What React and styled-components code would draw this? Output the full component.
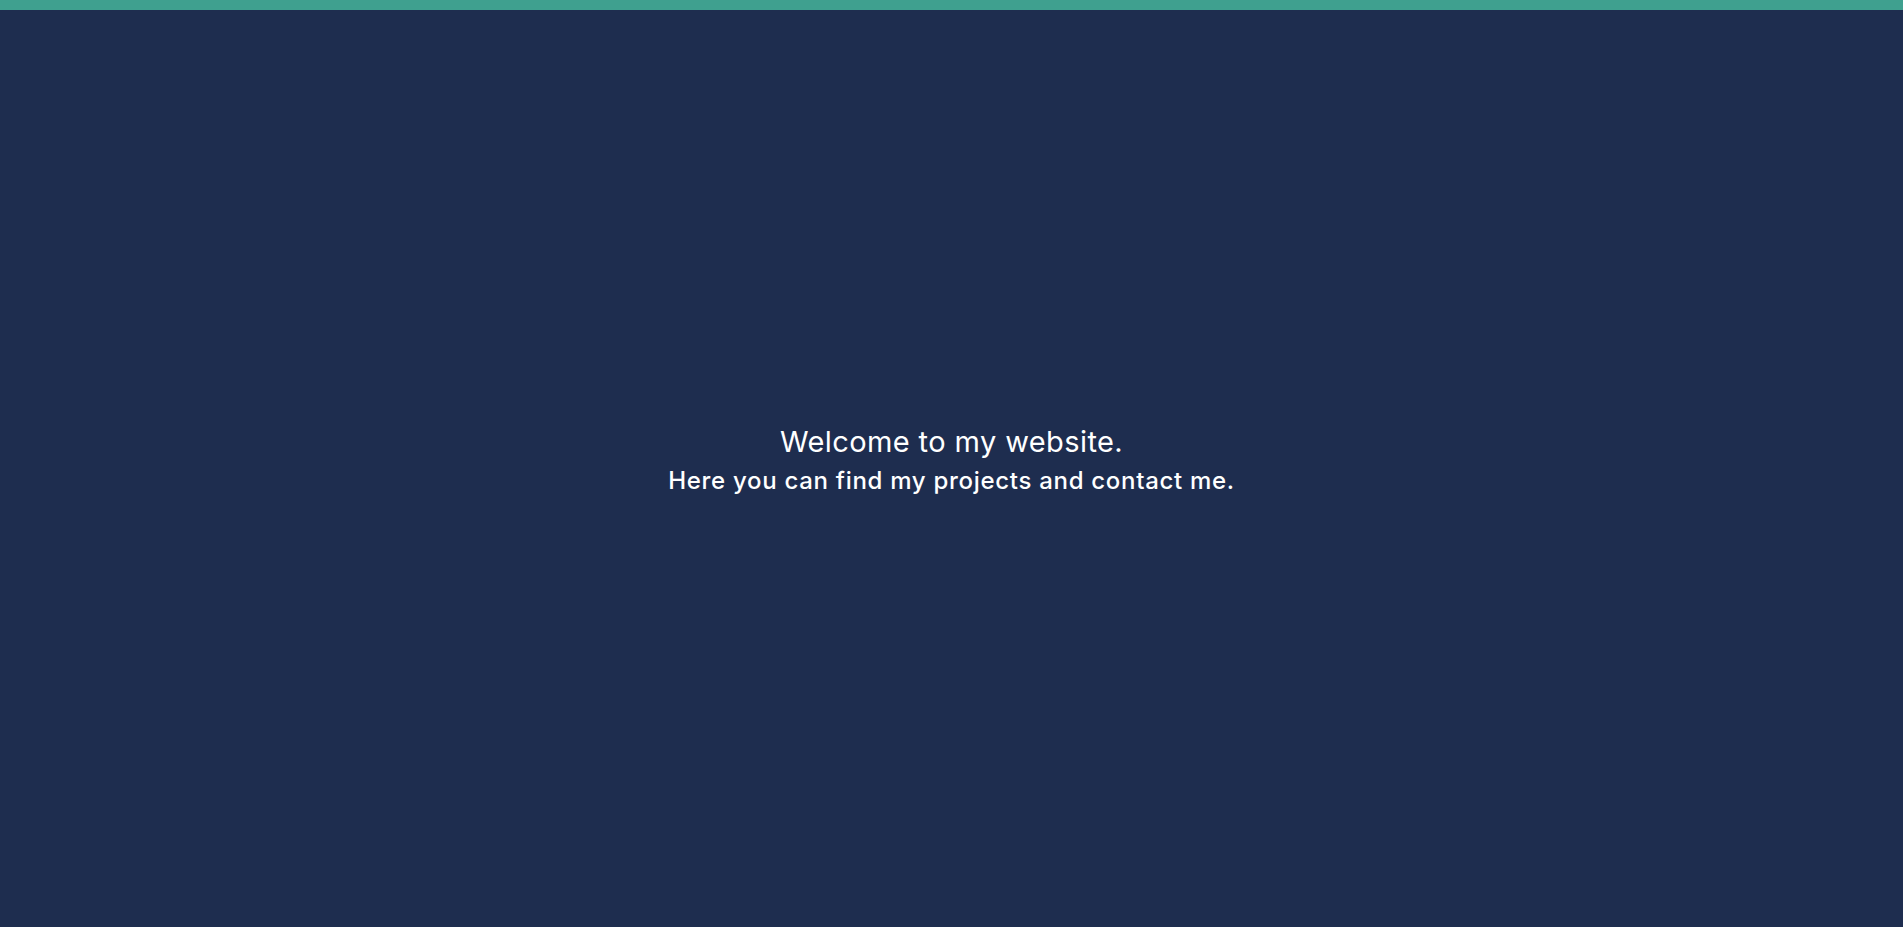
import React from "react";
import styled, { createGlobalStyle } from "styled-components";

const Global = createGlobalStyle`
  html, body { margin: 0; padding: 0; height: 100%; }
  body { background: #1e2d4f; font-family: "Inter", "Noto Sans", sans-serif; }
  #root { height: 100%; }
`;

const Page = styled.div`
  height: 100vh;
  display: flex;
  flex-direction: column;
  background: #1e2d4f;
`;

const TopBar = styled.div`
  flex: 0 0 10px;
  background: #3fa08f;
`;

const Hero = styled.main`
  flex: 1;
  display: flex;
  flex-direction: column;
  align-items: center;
  justify-content: center;
  padding-bottom: 16px;
  color: #ffffff;
  text-align: center;
`;

const Title = styled.h1`
  margin: 0;
  font-size: 29px;
  font-weight: 400;
  letter-spacing: 0.4px;
  line-height: 40px;
`;

const Subtitle = styled.p`
  margin: 0;
  font-size: 24px;
  font-weight: 500;
  letter-spacing: 0.7px;
  line-height: 38px;
`;

export default function App() {
  return (
    <>
      <Global />
      <Page>
        <TopBar />
        <Hero>
          <Title>Welcome to my website.</Title>
          <Subtitle>Here you can find my projects and contact me.</Subtitle>
        </Hero>
      </Page>
    </>
  );
}
